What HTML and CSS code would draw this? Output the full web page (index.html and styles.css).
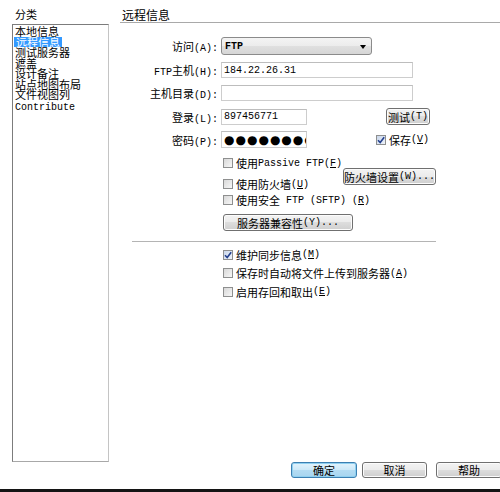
FILE: index.html
```html
<!DOCTYPE html>
<html lang="zh-CN">
<head>
<meta charset="utf-8">
<title>站点设置</title>
<link rel="stylesheet" href="styles.css">
</head>
<body>
<div class="dialog">
  <aside class="sidebar">
    <div class="side-title">分类</div>
    <ul class="cat-list">
      <li>本地信息</li>
      <li><span class="sel">远程信息</span></li>
      <li>测试服务器</li>
      <li>遮盖</li>
      <li>设计备注</li>
      <li>站点地图布局</li>
      <li>文件视图列</li>
      <li><span class="en">Contribute</span></li>
    </ul>
  </aside>

  <main class="panel">
    <h1 class="panel-title">远程信息</h1>

    <div class="form">
      <div class="row row-select">
        <label class="lbl">访问<span class="en">(A):</span></label>
        <div class="select"><span class="en strong">FTP</span><span class="arrow"></span></div>
      </div>
      <div class="row">
        <label class="lbl"><span class="en">FTP</span>主机<span class="en">(H):</span></label>
        <div class="field wide"><span class="en">184.22.26.31</span></div>
      </div>
      <div class="row">
        <label class="lbl">主机目录<span class="en">(D):</span></label>
        <div class="field wide"></div>
      </div>
      <div class="row row-btn">
        <label class="lbl">登录<span class="en">(L):</span></label>
        <div class="field short"><span class="en">897456771</span></div>
        <button class="btn btn-test">测试<span class="en">(T)</span></button>
      </div>
      <div class="row row-btn">
        <label class="lbl">密码<span class="en">(P):</span></label>
        <div class="field short pass"><span class="dots">●●●●●●●●●</span></div>
        <span class="save">
          <span class="cb on"><svg viewBox="0 0 10 10" width="10" height="10"><path d="M2 5.2 L4.2 7.5 L8.2 2.2" fill="none" stroke="#24408e" stroke-width="1.6"/></svg></span>
          保存<span class="en">(<u>V</u>)</span>
        </span>
      </div>
    </div>

    <div class="opts">
      <div class="opt"><span class="cb"></span>使用<span class="en">Passive FTP(<u>F</u>)</span></div>
      <div class="opt opt-fw">
        <span class="opt-main"><span class="cb"></span>使用防火墙<span class="en">(<u>U</u>)</span></span>
        <button class="btn btn-fw">防火墙设置<span class="en">(W)...</span></button>
      </div>
      <div class="opt"><span class="cb"></span>使用安全<span class="en"> FTP (SFTP) (<u>R</u>)</span></div>
      <button class="btn btn-compat">服务器兼容性<span class="en">(Y)...</span></button>
    </div>

    <hr class="sep">

    <div class="opts opts-sync">
      <div class="opt"><span class="cb on"><svg viewBox="0 0 10 10" width="10" height="10"><path d="M2 5.2 L4.2 7.5 L8.2 2.2" fill="none" stroke="#24408e" stroke-width="1.6"/></svg></span>维护同步信息<span class="en">(<u>M</u>)</span></div>
      <div class="opt"><span class="cb"></span>保存时自动将文件上传到服务器<span class="en">(<u>A</u>)</span></div>
      <div class="opt"><span class="cb"></span>启用存回和取出<span class="en">(<u>E</u>)</span></div>
    </div>

    <footer class="footer">
      <button class="btn btn-ok">确定</button>
      <button class="btn btn-cancel">取消</button>
      <button class="btn btn-help">帮助</button>
    </footer>
  </main>
</div>
<div class="taskbar"></div>
</body>
</html>
```

FILE: styles.css
```css
html, body {
  margin: 0;
  padding: 0;
  overflow: hidden;
}

body {
  width: 500px;
  height: 492px;
  background: #fff;
  color: #000;
  font-family: "Noto Sans CJK SC", sans-serif;
  font-size: 11px;
}

.en {
  font-family: "Liberation Mono", "DejaVu Sans Mono", monospace;
  font-size: 10px;
  white-space: pre;
}

.strong {
  font-weight: bold;
}

.dialog {
  display: flex;
  height: 489px;
}

.taskbar {
  height: 3px;
  background: #141414;
}

/* category column */
.sidebar {
  width: 120px;
  flex-shrink: 0;
  padding: 7px 0 0 12px;
  box-sizing: border-box;
}

.side-title {
  padding-left: 3px;
  line-height: 14px;
  height: 14px;
  margin-bottom: 3px;
}

.cat-list {
  list-style: none;
  margin: 0;
  padding: 1px 0 0 1px;
  width: 97px;
  height: 438px;
  box-sizing: border-box;
  border: 1px solid;
  border-color: #7c7c7c #c4c4c4 #a8a8a8 #7c7c7c;
}

.cat-list li {
  height: 10.5px;
  line-height: 10.5px;
  padding-left: 1px;
  white-space: nowrap;
}

.sel {
  display: inline-block;
  height: 10px;
  line-height: 10px;
  margin-left: -1px;
  padding: 0 2px;
  background: #3399ff;
  color: #fff;
}

/* settings panel */
.panel {
  flex: 1;
  min-width: 0;
  display: flex;
  flex-direction: column;
}

.panel-title {
  margin: 0;
  padding: 8px 0 0 2px;
  height: 14px;
  line-height: 14px;
  font-size: 12px;
  font-weight: normal;
  border-bottom: 1px solid #a9a9a9;
}

.form {
  margin-top: 14px;
}

.row {
  display: flex;
  align-items: center;
  height: 16px;
  margin-bottom: 7px;
}

.row-select {
  height: 18px;
}

.row-btn {
  height: 17px;
  margin-bottom: 6px;
}

.form .row:last-child {
  margin-bottom: 0;
}

.lbl {
  width: 98px;
  margin-right: 3px;
  text-align: right;
  white-space: nowrap;
}

.select {
  position: relative;
  width: 151px;
  height: 18px;
  box-sizing: border-box;
  border: 1px solid #8b8b8b;
  border-radius: 3px;
  background: linear-gradient(#f4f4f4, #ececec 50%, #e0e0e0 50%, #d6d6d6);
  display: flex;
  align-items: center;
  padding-left: 3px;
}

.arrow {
  position: absolute;
  right: 5px;
  top: 7px;
  width: 0;
  height: 0;
  border-left: 3.5px solid transparent;
  border-right: 3.5px solid transparent;
  border-top: 4px solid #000;
}

.field {
  height: 16px;
  box-sizing: border-box;
  border: 1px solid #cdcdcd;
  border-top-color: #bdbdbd;
  display: flex;
  align-items: center;
  padding-left: 2px;
  overflow: hidden;
  white-space: nowrap;
}

.wide {
  width: 192px;
}

.short {
  width: 86px;
}

.pass {
  height: 17px;
}

.dots {
  font-family: "DejaVu Sans", sans-serif;
  font-size: 12px;
  letter-spacing: 1px;
}

.btn {
  margin: 0;
  padding: 0;
  height: 17px;
  box-sizing: border-box;
  border: 1px solid #707070;
  border-radius: 3px;
  background: linear-gradient(#f3f3f3, #ebebeb 50%, #dddddd 50%, #cfcfcf);
  box-shadow: inset 0 0 0 1px #fcfcfc;
  color: #000;
  font-family: "Noto Sans CJK SC", sans-serif;
  font-size: 11px;
  display: flex;
  align-items: center;
  justify-content: center;
  white-space: nowrap;
  flex-shrink: 0;
}

.btn-test {
  width: 44px;
  margin-left: 79px;
}

.save {
  display: flex;
  align-items: center;
  margin-left: 69px;
}

/* checkboxes */
.cb {
  display: inline-block;
  width: 10px;
  height: 10px;
  box-sizing: border-box;
  border: 1px solid #8e8f8f;
  background: linear-gradient(135deg, #d8d8d8, #f7f7f7);
  margin-right: 3px;
  flex-shrink: 0;
  position: relative;
}

.cb.on {
  background: linear-gradient(135deg, #c9d6ea, #eef3fa);
}

.cb svg {
  position: absolute;
  left: -1px;
  top: -1px;
}

.opts {
  margin-top: 7px;
}

.opt {
  display: flex;
  align-items: center;
  height: 16px;
  margin-left: 103px;
  white-space: nowrap;
}

.opt-fw {
  margin-top: 5px;
}

.opt-main {
  width: 120px;
  display: flex;
  align-items: center;
}

.btn-fw {
  width: 93px;
  align-self: flex-start;
  margin-top: -8px;
}

.btn-compat {
  width: 130px;
  margin: 6px 0 0 103px;
}

.sep {
  width: 304px;
  margin: 10px 0 0 12px;
  border: 0;
  border-top: 1px solid #b4b4b4;
  height: 0;
}

.opts-sync {
  margin-top: 3.5px;
}

.opts-sync .opt {
  height: 18.5px;
}

/* dialog buttons */
.footer {
  margin-top: auto;
  display: flex;
  padding: 0 0 11px 171px;
}

.footer .btn {
  height: 16px;
}

.btn-ok {
  width: 66px;
  margin-right: 5px;
  border-color: #3c7fb1;
  background: linear-gradient(#e3f3fc, #cbe8f8 50%, #b3dcf3 50%, #a8d5ef);
  box-shadow: inset 0 0 0 1px #8fd0f0;
}

.btn-cancel {
  width: 65px;
  margin-right: 9px;
}

.btn-help {
  width: 66px;
}
```
